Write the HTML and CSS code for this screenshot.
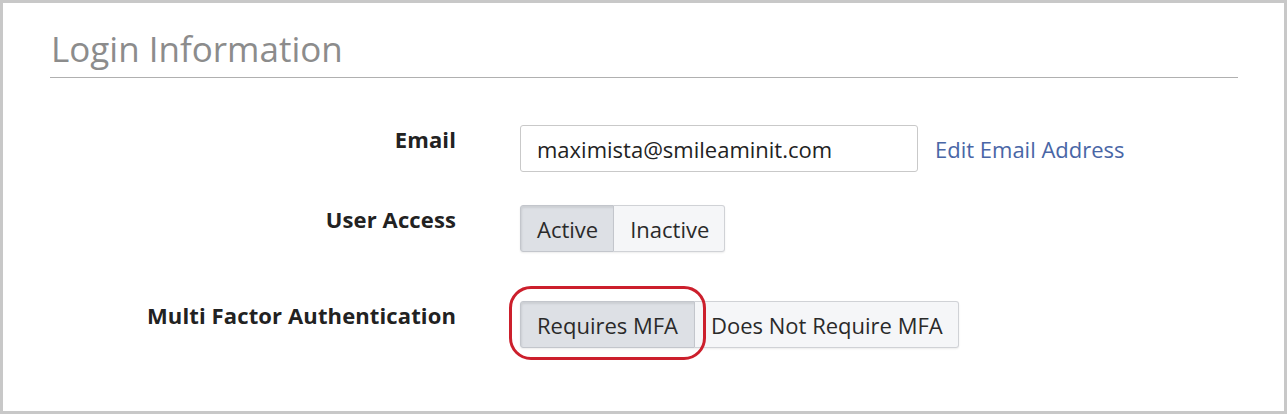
FILE: index.html
```html
<!DOCTYPE html>
<html lang="en">
<head>
<meta charset="utf-8">
<title>Login Information</title>
<link rel="stylesheet" href="styles.css">
</head>
<body>
<div class="frame">
  <h2 class="section-title">Login Information</h2>
  <div class="form">
    <div class="row row-email">
      <div class="label">Email</div>
      <div class="controls">
        <input class="text-input" type="text" value="maximista@smileaminit.com">
        <a class="link" href="#">Edit Email Address</a>
      </div>
    </div>
    <div class="row row-access">
      <div class="label">User Access</div>
      <div class="controls">
        <div class="btn-group">
          <button class="btn btn-selected">Active</button>
          <button class="btn">Inactive</button>
        </div>
      </div>
    </div>
    <div class="row row-mfa">
      <div class="label">Multi Factor Authentication</div>
      <div class="controls">
        <div class="btn-group">
          <div class="highlight-wrap">
            <button class="btn btn-selected">Requires MFA</button>
            <span class="highlight"></span>
          </div>
          <button class="btn">Does Not Require MFA</button>
        </div>
      </div>
    </div>
  </div>
</div>
</body>
</html>
```

FILE: styles.css
```css
* { box-sizing: border-box; }

html, body {
  margin: 0;
  padding: 0;
  background: #ffffff;
}

body {
  font-family: "Open Sans", "Noto Sans", "DejaVu Sans", sans-serif;
  color: #222;
}

.frame {
  width: 1287px;
  height: 414px;
  border: 3px solid #c8c8c8;
  padding: 25px 46px 0 47px;
  background: #fff;
}

.section-title {
  margin: 0;
  font-size: 35px;
  line-height: 42px;
  font-weight: 400;
  color: #8c8c8c;
  padding-bottom: 7px;
  border-bottom: 1px solid #b0b0b0;
  padding-left: 1px;
}

.form {
  display: flex;
  flex-direction: column;
}

.row {
  display: grid;
  grid-template-columns: 406px 1fr;
  column-gap: 64px;
  align-items: start;
}

.row-email { margin-top: 47px; }
.row-access { margin-top: 33px; }
.row-mfa { margin-top: 49px; }

.label {
  text-align: right;
  font-weight: 700;
  font-size: 22px;
  line-height: 28px;
  letter-spacing: 0.12px;
  color: #222;
}

.controls {
  display: flex;
  align-items: center;
}

.text-input {
  width: 398px;
  height: 47px;
  border: 1px solid #c9c9c9;
  border-radius: 3px;
  padding: 0 16px;
  font-family: inherit;
  font-size: 22px;
  color: #222;
  background: #fff;
  outline: none;
}

.link {
  margin-left: 17px;
  font-size: 22px;
  color: #4966a6;
  text-decoration: none;
}

.btn-group {
  display: flex;
  align-items: stretch;
  box-shadow: 0 1px 2px rgba(0,0,0,0.08);
  border-radius: 3px;
}

.btn {
  height: 47px;
  padding: 0 15px 0 16px;
  font-family: inherit;
  font-size: 22px;
  color: #2a2a2a;
  background: #f5f6f8;
  border: 1px solid #d0d2d6;
  margin: 0;
  cursor: pointer;
}

.btn-group > .btn:first-child,
.btn-group > .highlight-wrap > .btn {
  border-radius: 3px 0 0 3px;
}

.btn-group > .highlight-wrap > .btn {
  padding: 0 16px;
}

.btn-group > .btn:last-child {
  border-radius: 0 3px 3px 0;
  border-left: none;
}

.btn-selected {
  background: #dde0e5;
  border-color: #c3c6cc;
  box-shadow: inset 1px 2px 2px rgba(0,0,0,0.08);
}

.highlight-wrap {
  position: relative;
  display: flex;
}

.highlight {
  position: absolute;
  left: -11px;
  top: -15px;
  width: 197px;
  height: 74px;
  border: 3px solid #cc1f2c;
  border-radius: 22px;
  pointer-events: none;
}
```
